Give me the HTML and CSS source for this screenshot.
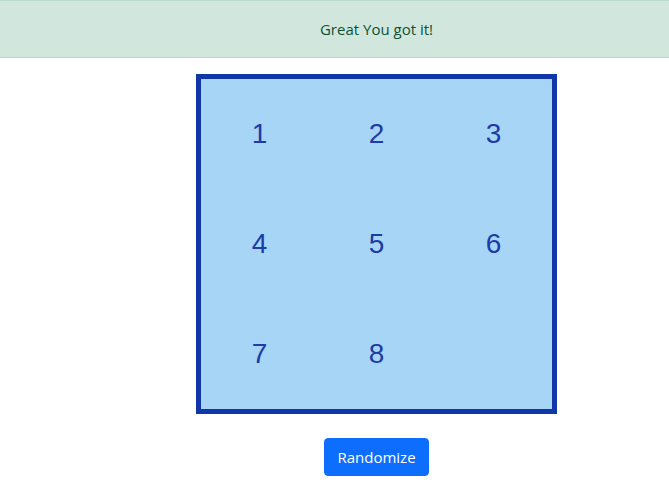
FILE: index.html
```html
<!DOCTYPE html>
<html>
<head>
<meta charset="utf-8">
<link rel="stylesheet" href="styles.css">
</head>
<body>
<div class="alert">Great You got it!</div>
<main class="main">
  <div class="board">
    <div class="cell">1</div>
    <div class="cell">2</div>
    <div class="cell">3</div>
    <div class="cell">4</div>
    <div class="cell">5</div>
    <div class="cell">6</div>
    <div class="cell">7</div>
    <div class="cell">8</div>
    <div class="cell"></div>
  </div>
  <button class="btn">Randomize</button>
</main>
</body>
</html>
```
FILE: styles.css
```css
html, body {
  margin: 0;
  padding: 0;
  background: #fff;
}
body {
  font-family: "Open Sans", "Noto Sans", sans-serif;
}
.alert {
  background: #d1e7dd;
  border-top: 1px solid #badbcc;
  border-bottom: 1px solid #badbcc;
  color: #0f5132;
  font-size: 15px;
  line-height: 24px;
  padding: 16px 0 16px 84px;
  text-align: center;
}
.main {
  display: flex;
  flex-direction: column;
  align-items: center;
  padding-left: 84px;
  padding-top: 16px;
}
.board {
  width: 351px;
  height: 330px;
  border: 5px solid #1036a8;
  background: #a6d5f5;
  display: grid;
  grid-template-columns: repeat(3, 1fr);
  grid-template-rows: repeat(3, 1fr);
}
.cell {
  display: flex;
  align-items: center;
  justify-content: center;
  font-family: "Liberation Sans", Arial, sans-serif;
  font-size: 28px;
  color: #1e3ca6;
}
.btn {
  margin-top: 24px;
  background: #0d6efd;
  color: #fff;
  border: 1px solid #0d6efd;
  border-radius: 4px;
  font-family: "Open Sans", "Noto Sans", sans-serif;
  font-size: 15px;
  line-height: 24px;
  padding: 6px 12px;
  width: 105px;
}
```
